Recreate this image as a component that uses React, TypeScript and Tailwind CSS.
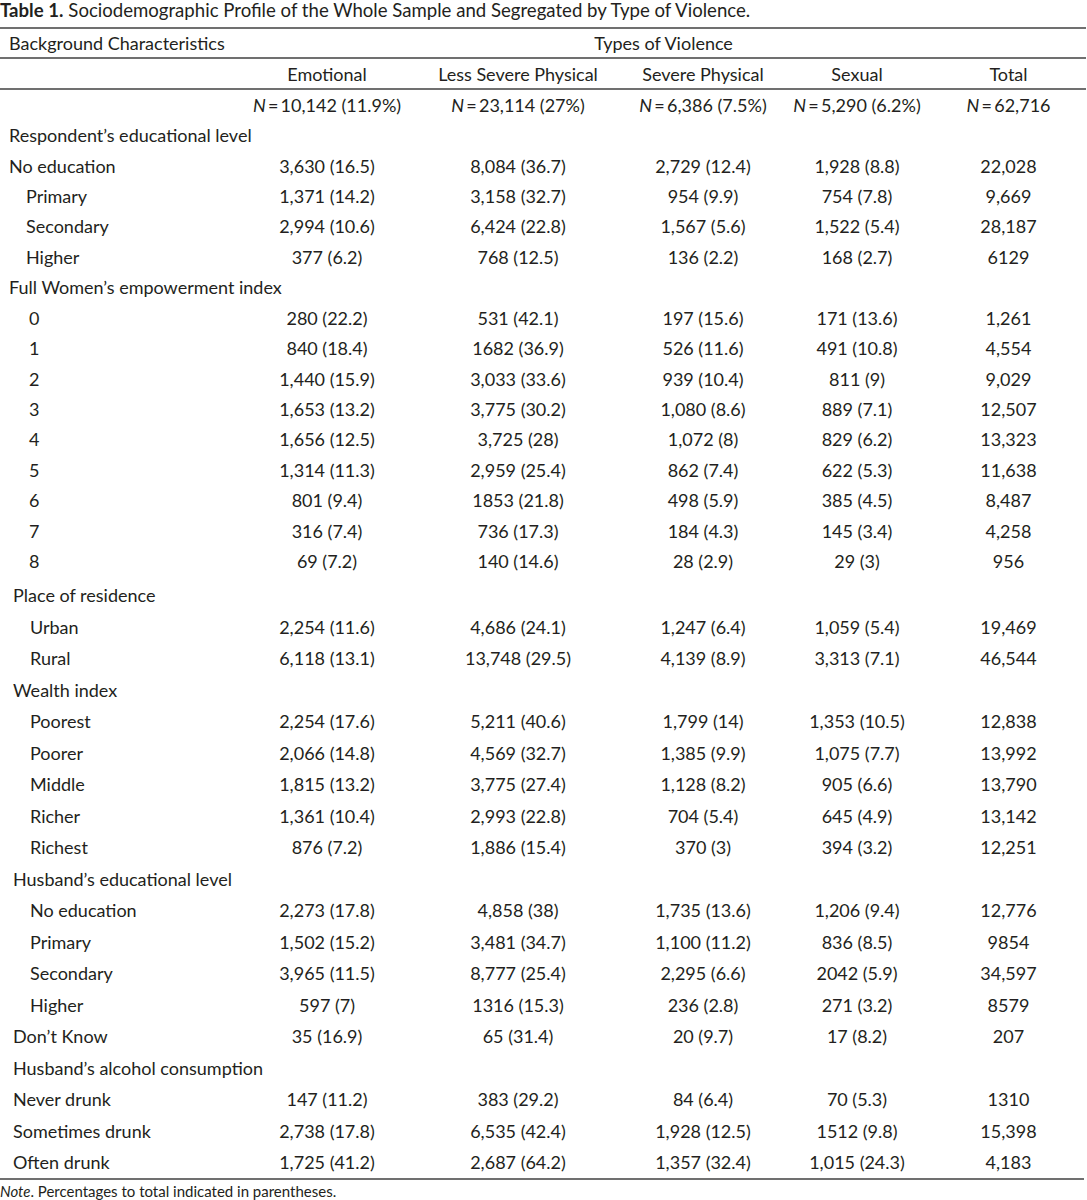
import React from "react";

type Row = { label: string; indent: number; cells?: string[]; h: "a" | "b" };

const sec1: Row[] = [
  { label: "Respondent\u2019s educational level", indent: 9, h: "a" },
  { label: "No education", indent: 9, cells: ["3,630 (16.5)", "8,084 (36.7)", "2,729 (12.4)", "1,928 (8.8)", "22,028"], h: "a" },
  { label: "Primary", indent: 26, cells: ["1,371 (14.2)", "3,158 (32.7)", "954 (9.9)", "754 (7.8)", "9,669"], h: "a" },
  { label: "Secondary", indent: 26, cells: ["2,994 (10.6)", "6,424 (22.8)", "1,567 (5.6)", "1,522 (5.4)", "28,187"], h: "a" },
  { label: "Higher", indent: 26, cells: ["377 (6.2)", "768 (12.5)", "136 (2.2)", "168 (2.7)", "6129"], h: "a" },
  { label: "Full Women\u2019s empowerment index", indent: 9, h: "a" },
  { label: "0", indent: 29, cells: ["280 (22.2)", "531 (42.1)", "197 (15.6)", "171 (13.6)", "1,261"], h: "a" },
  { label: "1", indent: 29, cells: ["840 (18.4)", "1682 (36.9)", "526 (11.6)", "491 (10.8)", "4,554"], h: "a" },
  { label: "2", indent: 29, cells: ["1,440 (15.9)", "3,033 (33.6)", "939 (10.4)", "811 (9)", "9,029"], h: "a" },
  { label: "3", indent: 29, cells: ["1,653 (13.2)", "3,775 (30.2)", "1,080 (8.6)", "889 (7.1)", "12,507"], h: "a" },
  { label: "4", indent: 29, cells: ["1,656 (12.5)", "3,725 (28)", "1,072 (8)", "829 (6.2)", "13,323"], h: "a" },
  { label: "5", indent: 29, cells: ["1,314 (11.3)", "2,959 (25.4)", "862 (7.4)", "622 (5.3)", "11,638"], h: "a" },
  { label: "6", indent: 29, cells: ["801 (9.4)", "1853 (21.8)", "498 (5.9)", "385 (4.5)", "8,487"], h: "a" },
  { label: "7", indent: 29, cells: ["316 (7.4)", "736 (17.3)", "184 (4.3)", "145 (3.4)", "4,258"], h: "a" },
  { label: "8", indent: 29, cells: ["69 (7.2)", "140 (14.6)", "28 (2.9)", "29 (3)", "956"], h: "a" },
];

const sec2: Row[] = [
  { label: "Place of residence", indent: 13, h: "b" },
  { label: "Urban", indent: 30, cells: ["2,254 (11.6)", "4,686 (24.1)", "1,247 (6.4)", "1,059 (5.4)", "19,469"], h: "b" },
  { label: "Rural", indent: 30, cells: ["6,118 (13.1)", "13,748 (29.5)", "4,139 (8.9)", "3,313 (7.1)", "46,544"], h: "b" },
  { label: "Wealth index", indent: 13, h: "b" },
  { label: "Poorest", indent: 30, cells: ["2,254 (17.6)", "5,211 (40.6)", "1,799 (14)", "1,353 (10.5)", "12,838"], h: "b" },
  { label: "Poorer", indent: 30, cells: ["2,066 (14.8)", "4,569 (32.7)", "1,385 (9.9)", "1,075 (7.7)", "13,992"], h: "b" },
  { label: "Middle", indent: 30, cells: ["1,815 (13.2)", "3,775 (27.4)", "1,128 (8.2)", "905 (6.6)", "13,790"], h: "b" },
  { label: "Richer", indent: 30, cells: ["1,361 (10.4)", "2,993 (22.8)", "704 (5.4)", "645 (4.9)", "13,142"], h: "b" },
  { label: "Richest", indent: 30, cells: ["876 (7.2)", "1,886 (15.4)", "370 (3)", "394 (3.2)", "12,251"], h: "b" },
  { label: "Husband\u2019s educational level", indent: 13, h: "b" },
  { label: "No education", indent: 30, cells: ["2,273 (17.8)", "4,858 (38)", "1,735 (13.6)", "1,206 (9.4)", "12,776"], h: "b" },
  { label: "Primary", indent: 30, cells: ["1,502 (15.2)", "3,481 (34.7)", "1,100 (11.2)", "836 (8.5)", "9854"], h: "b" },
  { label: "Secondary", indent: 30, cells: ["3,965 (11.5)", "8,777 (25.4)", "2,295 (6.6)", "2042 (5.9)", "34,597"], h: "b" },
  { label: "Higher", indent: 30, cells: ["597 (7)", "1316 (15.3)", "236 (2.8)", "271 (3.2)", "8579"], h: "b" },
  { label: "Don\u2019t Know", indent: 13, cells: ["35 (16.9)", "65 (31.4)", "20 (9.7)", "17 (8.2)", "207"], h: "b" },
  { label: "Husband\u2019s alcohol consumption", indent: 13, h: "b" },
  { label: "Never drunk", indent: 13, cells: ["147 (11.2)", "383 (29.2)", "84 (6.4)", "70 (5.3)", "1310"], h: "b" },
  { label: "Sometimes drunk", indent: 13, cells: ["2,738 (17.8)", "6,535 (42.4)", "1,928 (12.5)", "1512 (9.8)", "15,398"], h: "b" },
  { label: "Often drunk", indent: 13, cells: ["1,725 (41.2)", "2,687 (64.2)", "1,357 (32.4)", "1,015 (24.3)", "4,183"], h: "b" },
];

const gridCols = "grid grid-cols-[240px_174px_208px_162px_146px_157px]";

function DataRow({ r }: { r: Row }) {
  return (
    <div className={`${gridCols} items-center ${r.h === "a" ? "h-[30.43px]" : "h-[31.5px]"}`}>
      <div style={{ paddingLeft: r.indent }} className="whitespace-nowrap">
        {r.label}
      </div>
      {(r.cells ?? ["", "", "", "", ""]).map((c, i) => (
        <div key={i} className="text-center whitespace-nowrap">
          {c}
        </div>
      ))}
    </div>
  );
}

function NCell({ n, rest }: { n: string; rest: string }) {
  return (
    <div className="text-center whitespace-nowrap">
      <span className="italic">N</span>
      {"\u2009=\u2009"}
      {n}
      {rest}
    </div>
  );
}

export default function App() {
  return (
    <div
      className="w-[1087px] h-[1200px] bg-white text-[#231f20] text-[18px] leading-none overflow-hidden"
      style={{ fontFamily: "Lato, 'Open Sans', sans-serif" }}
    >
      <div className="h-[27px] flex items-center text-[18.6px] pb-[6px]">
        <span className="font-bold">Table 1.</span>
        <span className="ml-[5px]">Sociodemographic Profile of the Whole Sample and Segregated by Type of Violence.</span>
      </div>
      <div className="h-[2px] bg-[#707070] w-[1086px]" />
      <div className={`${gridCols} items-center h-[28px]`}>
        <div className="pl-[9px] whitespace-nowrap">Background Characteristics</div>
        <div className="col-span-5 text-center">Types of Violence</div>
      </div>
      <div className="h-[2px] bg-[#707070] w-[1086px]" />
      <div className={`${gridCols} items-center h-[29px]`}>
        <div />
        <div className="text-center">Emotional</div>
        <div className="text-center">Less Severe Physical</div>
        <div className="text-center">Severe Physical</div>
        <div className="text-center">Sexual</div>
        <div className="text-center">Total</div>
      </div>
      <div className="h-[2px] bg-[#707070] w-[1086px]" />
      <div className={`${gridCols} items-center h-[30px]`}>
        <div />
        <NCell n="10,142" rest=" (11.9%)" />
        <NCell n="23,114" rest=" (27%)" />
        <NCell n="6,386" rest=" (7.5%)" />
        <NCell n="5,290" rest=" (6.2%)" />
        <NCell n="62,716" rest="" />
      </div>
      {sec1.map((r, i) => (
        <DataRow key={"a" + i} r={r} />
      ))}
      <div className="h-[3px]" />
      {sec2.map((r, i) => (
        <DataRow key={"b" + i} r={r} />
      ))}
      <div className="h-[2px] bg-[#707070] w-[1084px]" />
      <div className="h-[24px] flex items-center text-[15px]">
        <span className="italic">Note</span>. Percentages to total indicated in parentheses.
      </div>
    </div>
  );
}
